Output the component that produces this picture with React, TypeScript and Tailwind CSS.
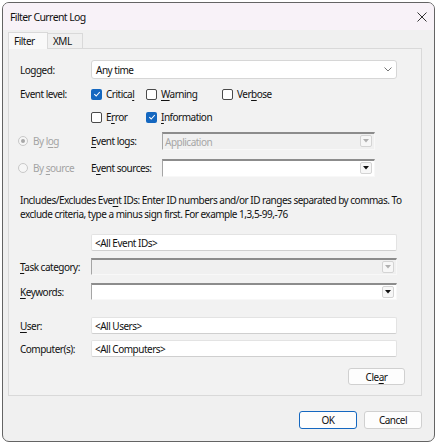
import React from 'react';

const font = { fontFamily: '"Noto Sans", "Open Sans", sans-serif' };

const U = ({ pre = '', u = '', post = '' }: { pre?: string; u?: string; post?: string }) => (
  <span>
    {pre}
    <span className="underline underline-offset-[2px]">{u}</span>
    {post}
  </span>
);

const Check = ({ checked, children, w }: { checked?: boolean; children: React.ReactNode; w: string }) => (
  <div className={`flex items-center gap-[4px] ${w}`}>
    {checked ? (
      <span className="w-[11px] h-[11px] shrink-0 rounded-[2px] bg-[#1467c0] flex items-center justify-center">
        <svg width="8" height="8" viewBox="0 0 8 8">
          <path d="M1.3 4.2 L3.2 6 L6.8 2" fill="none" stroke="white" strokeWidth="1.1" />
        </svg>
      </span>
    ) : (
      <span className="w-[11px] h-[11px] shrink-0 rounded-[2px] border border-[#4a4a4a] bg-white" />
    )}
    <span className="text-[#111]">{children}</span>
  </div>
);

const Radio = ({ checked, children }: { checked?: boolean; children: React.ReactNode }) => (
  <div className="flex items-center gap-[5px] w-[73px] -ml-[2px] text-[#a3a3a3]">
    <span className="w-[10px] h-[10px] shrink-0 rounded-full border border-[#c8c8c8] bg-[#f6f6f6] flex items-center justify-center">
      {checked && <span className="w-[4px] h-[4px] rounded-full bg-[#a8a8a8]" />}
    </span>
    {children}
  </div>
);

const ArrowBtn = ({ disabled }: { disabled?: boolean }) => (
  <span className="absolute right-[2px] top-[1px] w-[12px] h-[12px] rounded-[2px] border border-[#d4d4d4] bg-[#f7f7f7] flex items-center justify-center">
    <svg width="6" height="4" viewBox="0 0 6 4">
      <path d="M0 0 H6 L3 3.5 Z" fill={disabled ? '#b0b0b0' : '#111'} />
    </svg>
  </span>
);

const Combo = ({ w, h, disabled, text }: { w: string; h: string; disabled?: boolean; text?: string }) => (
  <div
    className={`relative ${w} ${h} border-t-2 border-l border-t-[#8c8c8c] border-l-[#a5a5a5] border-r border-b border-r-[#f8f8f8] border-b-[#f8f8f8] ${
      disabled ? 'bg-[#f0f0f0]' : 'bg-white'
    } flex items-center pl-[2px]`}
  >
    {text && <span className="text-[#a6a6a6]">{text}</span>}
    <ArrowBtn disabled={disabled} />
  </div>
);

const TextBox = ({ text }: { text: string }) => (
  <div className="w-[306px] h-[17px] bg-white border border-[#e3e3e3] border-b-[#cfcfcf] rounded-[2px] flex items-center pl-[3px] text-[#111]">
    {text}
  </div>
);

const Label = ({ children }: { children?: React.ReactNode }) => (
  <div className="w-[71px] shrink-0 text-[#111]">{children}</div>
);

export default function App() {
  return (
    <div className="w-[438px] h-[445px] bg-white pt-[2px] pl-[2px]" style={font}>
      <div className="w-[433px] h-[440px] border border-[#646464] rounded-[7px] overflow-hidden bg-[#f0f0f0] flex flex-col text-[10px] tracking-[-0.5px] leading-[14px]">
        <div className="h-[27px] shrink-0 bg-[#f8f2f8] flex items-center justify-between pl-[7px] pr-[6px]">
          <span className="text-[10.5px] tracking-[-0.6px] text-[#111]">Filter Current Log</span>
          <svg width="12" height="12" viewBox="0 0 12 12">
            <path d="M1.5 1.5 L10.5 10.5 M10.5 1.5 L1.5 10.5" stroke="#333" strokeWidth="1" />
          </svg>
        </div>

        <div className="flex-1 pl-[5px] pr-[12px] pt-[2px] flex flex-col">
          <div className="flex items-end h-[16px]">
            <div className="w-[40px] h-[17px] bg-[#f9f9f9] border border-b-0 border-[#d9d9d9] flex items-center pl-[5px] text-[#111] relative top-[1px] z-10">
              Filter
            </div>
            <div className="w-[35px] h-[15px] bg-[#f0f0f0] border border-l-0 border-b-0 border-[#d9d9d9] flex items-center pl-[5px] text-[#111]">
              XML
            </div>
          </div>

          <div className="h-[348px] border border-[#d9d9d9] bg-[#f2f2f2] pl-[11px] pt-[11px] flex flex-col">
            <div className="flex items-center h-[19px]">
              <Label>Logged:</Label>
              <div className="w-[306px] h-[19px] bg-white border border-[#d6d6d6] rounded-[3px] flex items-center justify-between pl-[4px] pr-[4px] text-[#111]">
                <span>Any time</span>
                <svg width="8" height="5" viewBox="0 0 8 5">
                  <path d="M0.5 0.5 L4 4 L7.5 0.5" fill="none" stroke="#666" strokeWidth="0.9" />
                </svg>
              </div>
            </div>

            <div className="flex items-center h-[16px] mt-[7px]">
              <Label>Event level:</Label>
              <Check checked w="w-[55px]">
                <U pre="Critica" u="l" />
              </Check>
              <Check w="w-[76px]">
                <U u="W" post="arning" />
              </Check>
              <Check w="w-[70px]">
                <U pre="Ver" u="b" post="ose" />
              </Check>
            </div>

            <div className="flex items-center h-[16px] mt-[7px]">
              <Label />
              <Check w="w-[55px]">
                <U pre="E" u="r" post="ror" />
              </Check>
              <Check checked w="w-[90px]">
                <U u="I" post="nformation" />
              </Check>
            </div>

            <div className="flex items-center h-[18px] mt-[7px]">
              <Radio checked>
                <U pre="By l" u="o" post="g" />
              </Radio>
              <div className="w-[71px] text-[#111]">
                <U u="E" post="vent logs:" />
              </div>
              <Combo w="w-[213px]" h="h-[18px]" disabled text="Application" />
            </div>

            <div className="flex items-center h-[18px] mt-[9px]">
              <Radio>
                <U pre="By " u="s" post="ource" />
              </Radio>
              <div className="w-[71px] text-[#111]">
                <U pre="E" u="v" post="ent sources:" />
              </div>
              <Combo w="w-[213px]" h="h-[18px]" />
            </div>

            <p className="mt-[16px] text-[#111] pr-[6px]">
              Includes/Excludes Eve<span className="underline underline-offset-[2px]">n</span>t IDs: Enter ID numbers and/or ID ranges separated by commas. To exclude criteria, type a minus sign first. For example 1,3,5-99,-76
            </p>

            <div className="flex items-center mt-[13px]">
              <Label />
              <TextBox text="<All Event IDs>" />
            </div>

            <div className="flex items-center mt-[7px]">
              <Label>
                <U u="T" post="ask category:" />
              </Label>
              <Combo w="w-[306px]" h="h-[17px]" disabled />
            </div>

            <div className="flex items-center mt-[8px]">
              <Label>
                <U u="K" post="eywords:" />
              </Label>
              <Combo w="w-[306px]" h="h-[17px]" />
            </div>

            <div className="flex items-center mt-[17px]">
              <Label>
                <U u="U" post="ser:" />
              </Label>
              <TextBox text="<All Users>" />
            </div>

            <div className="flex items-center mt-[6px]">
              <Label>Computer(s):</Label>
              <TextBox text="<All Computers>" />
            </div>

            <div className="flex justify-end mt-[11px] pr-[16px]">
              <button className="w-[57px] h-[17px] bg-[#fdfdfd] border border-[#d0d0d0] rounded-[3px] text-[#111] flex items-center justify-center">
                <U pre="Cle" u="a" post="r" />
              </button>
            </div>
          </div>

          <div className="flex justify-end gap-[7px] mt-[15px]">
            <button className="w-[58px] h-[18px] bg-[#fdfdfd] border border-[#1467c0] rounded-[3px] text-[#111] flex items-center justify-center">
              OK
            </button>
            <button className="w-[58px] h-[18px] bg-[#fdfdfd] border border-[#d0d0d0] rounded-[3px] text-[#111] flex items-center justify-center">
              Cancel
            </button>
          </div>
        </div>
      </div>
    </div>
  );
}
